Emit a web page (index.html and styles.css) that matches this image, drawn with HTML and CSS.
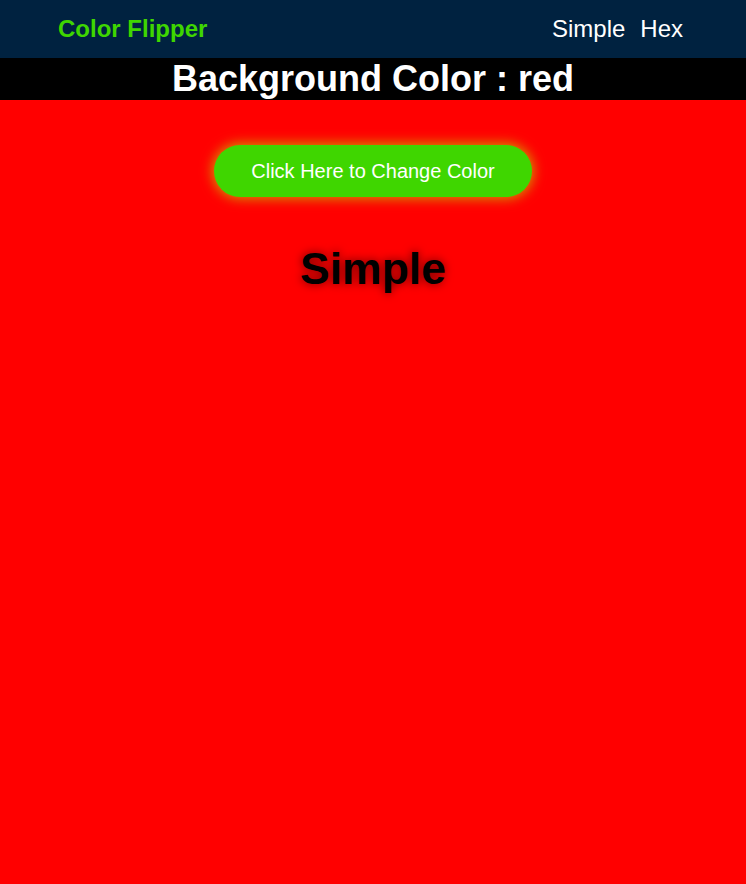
FILE: index.html
```html
<!DOCTYPE html>
<html>
<head>
<meta charset="utf-8">
<link rel="stylesheet" href="styles.css">
</head>
<body>
<nav class="navbar">
  <div class="brand">Color Flipper</div>
  <div class="links"><a href="#">Simple</a><a href="#">Hex</a></div>
</nav>
<div class="banner">Background Color : red</div>
<main class="main">
  <button class="btn">Click Here to Change Color</button>
  <h1 class="title">Simple</h1>
</main>
</body>
</html>
```
FILE: styles.css
```css
html, body {
  margin: 0;
  padding: 0;
  height: 100%;
}
body {
  font-family: "Liberation Sans", Arial, sans-serif;
  background: #ff0000;
  display: flex;
  flex-direction: column;
}
.navbar {
  height: 58px;
  background: #002240;
  display: flex;
  align-items: center;
  justify-content: space-between;
  padding: 0 63px 0 58px;
}
.brand {
  color: #3fd600;
  font-weight: bold;
  font-size: 24px;
}
.links {
  display: flex;
  gap: 15px;
}
.links a {
  color: #ffffff;
  text-decoration: none;
  font-size: 24px;
}
.banner {
  height: 42px;
  background: #000000;
  color: #ffffff;
  font-weight: bold;
  font-size: 36px;
  line-height: 42px;
  text-align: center;
}
.main {
  flex: 1;
  display: flex;
  flex-direction: column;
  align-items: center;
  padding-top: 45px;
}
.btn {
  font-family: "Liberation Sans", Arial, sans-serif;
  font-size: 20px;
  color: #ffffff;
  background: #3fd600;
  border: none;
  border-radius: 26px;
  height: 52px;
  padding: 0 37px;
  box-shadow: 0 0 12px 2px rgba(200, 180, 0, 0.8);
}
.title {
  margin: 46px 0 0;
  font-size: 44.5px;
  font-weight: bold;
  color: #000000;
  line-height: 1.15;
  text-shadow: 0 0 10px rgba(0, 0, 0, 0.6);
}
```
